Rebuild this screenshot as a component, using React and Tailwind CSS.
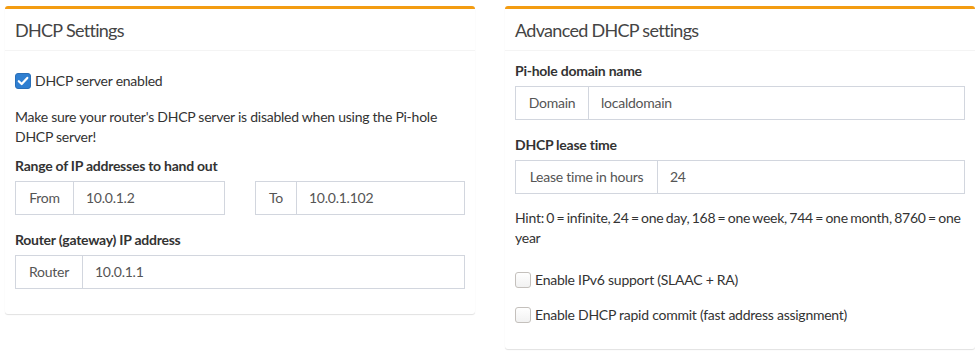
import React from "react";

const font = { fontFamily: "Lato, 'Noto Sans', sans-serif" };

function Checked() {
  return (
    <svg width="16" height="16" viewBox="0 0 16 16" className="shrink-0">
      <rect x="0.5" y="0.5" width="15" height="15" rx="2.5" fill="#2f7fd1" stroke="#2a6fb8" />
      <path d="M3.8 8.2 L6.7 11 L12.3 4.9" fill="none" stroke="#fff" strokeWidth="2.2" strokeLinecap="round" strokeLinejoin="round" />
    </svg>
  );
}

function Unchecked() {
  return (
    <svg width="16" height="16" viewBox="0 0 16 16" className="shrink-0">
      <defs>
        <linearGradient id="ug" x1="0" y1="0" x2="0" y2="1">
          <stop offset="0" stopColor="#ffffff" />
          <stop offset="1" stopColor="#f1f1f1" />
        </linearGradient>
      </defs>
      <rect x="0.5" y="0.5" width="15" height="15" rx="2.5" fill="url(#ug)" stroke="#c4c0bc" />
    </svg>
  );
}

function Group({ addon, value, addonW }) {
  return (
    <div className="flex h-[34px] border border-[#d2d6de] text-[14px] text-[#555]">
      <div className={`flex shrink-0 items-center justify-center whitespace-nowrap border-r border-[#d2d6de] ${addonW}`}>{addon}</div>
      <div className="flex items-center whitespace-nowrap px-[12px]">{value}</div>
    </div>
  );
}

function Box({ title, children }) {
  return (
    <div className="w-[470px] shrink-0 rounded-[3px] border-t-[3px] border-[#f39c12] bg-white shadow-[0_1px_1px_rgba(0,0,0,0.12)]">
      <div className="flex h-[42px] items-center border-b border-[#f4f4f4] px-[10px] text-[18px] tracking-[-0.7px] text-[#444]">{title}</div>
      {children}
    </div>
  );
}

export default function App() {
  return (
    <div style={font} className="min-h-[361px] w-[975px] overflow-hidden bg-white text-[14px] leading-[20px] tracking-[-0.25px] text-[#333]">
      <div className="flex items-start gap-[30px] pl-[5px] pt-[6px]">
        <Box title="DHCP Settings">
          <div className="px-[10px] pt-[10px] pb-[25px]">
            <div className="mt-[10px] flex h-[20px] items-center gap-[4px]">
              <Checked />
              <span>DHCP server enabled</span>
            </div>
            <p className="mt-[16px]">Make sure your router's DHCP server is disabled when using the Pi-hole DHCP server!</p>
            <div className="mt-[9px] mb-[5px] font-bold">Range of IP addresses to hand out</div>
            <div className="grid grid-cols-2 gap-[30px]">
              <Group addon="From" value="10.0.1.2" addonW="w-[58px]" />
              <Group addon="To" value="10.0.1.102" addonW="w-[41px]" />
            </div>
            <div className="mt-[15px] mb-[5px] font-bold">Router (gateway) IP address</div>
            <Group addon="Router" value="10.0.1.1" addonW="w-[67px]" />
          </div>
        </Box>
        <Box title="Advanced DHCP settings">
          <div className="px-[10px] pt-[10px] pb-[24px]">
            <div className="mb-[5px] font-bold">Pi-hole domain name</div>
            <Group addon="Domain" value="localdomain" addonW="w-[73px]" />
            <div className="mt-[15px] mb-[5px] font-bold">DHCP lease time</div>
            <Group addon="Lease time in hours" value="24" addonW="w-[142px]" />
            <p className="mt-[14px] [word-spacing:-1px]">Hint: 0 = infinite, 24 = one day, 168 = one week, 744 = one month, 8760 = one year</p>
            <div className="mt-[22px] flex h-[20px] items-center gap-[4px]">
              <Unchecked />
              <span>Enable IPv6 support (SLAAC + RA)</span>
            </div>
            <div className="mt-[15px] flex h-[20px] items-center gap-[4px]">
              <Unchecked />
              <span>Enable DHCP rapid commit (fast address assignment)</span>
            </div>
          </div>
        </Box>
      </div>
    </div>
  );
}
